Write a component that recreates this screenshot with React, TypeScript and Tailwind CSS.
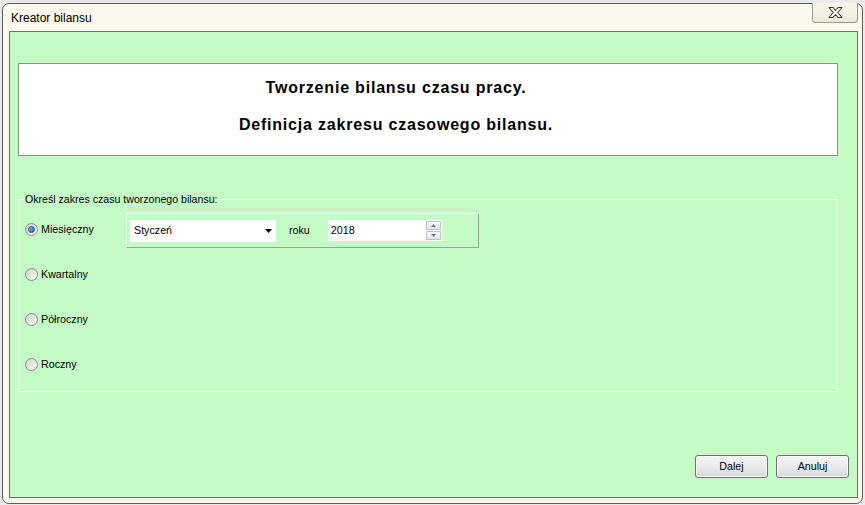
import React from "react";

const font = { fontFamily: '"Liberation Sans", Arial, sans-serif' };

function Radio({ checked, label }: { checked?: boolean; label: string }) {
  return (
    <div className="flex items-center h-[13px]">
      <div className="w-[13px] h-[13px] rounded-full border border-[#8b8b8b] bg-gradient-to-br from-[#d2d2d2] to-[#fafafa] flex items-center justify-center">
        {checked && (
          <div className="w-[7px] h-[7px] rounded-full bg-gradient-to-br from-[#7fc4f4] to-[#1a5fa8] border border-[#1d4f86]" />
        )}
      </div>
      <span className="ml-[3px] text-[10.7px] text-black leading-none">{label}</span>
    </div>
  );
}

function Btn({ label }: { label: string }) {
  return (
    <div className="w-[73px] h-[23px] rounded-[3px] border border-[#707070] bg-gradient-to-b from-[#f4f4f4] via-[#ebebeb] to-[#d9d9d9] flex items-center justify-center text-[10.7px] text-black shadow-[inset_0_0_0_1px_#fcfcfc]">
      {label}
    </div>
  );
}

export default function App() {
  return (
    <div className="w-[865px] h-[505px] bg-[#eaeaea] overflow-hidden pt-[3px] pl-[2px]" style={font}>
      <div className="w-[861px] h-[501px] rounded-[7px] border border-[#5d5d5d] bg-[#fbf9ec] flex flex-col">
        {/* title bar */}
        <div className="h-[27px] flex items-start justify-between pl-[8px] pr-[4px]">
          <span className="mt-[7px] text-[12px] text-black leading-[14px]">Kreator bilansu</span>
          <div className="-mt-[1px] w-[46px] h-[20px] rounded-b-[4px] border border-t-0 border-[#9a9a8a] bg-gradient-to-b from-[#faf7ea] to-[#eeebdc] flex items-center justify-center">
            <svg width="17" height="13" viewBox="0 0 17 13">
              <path
                d="M2 1.5 L6 1.5 L8.5 4.5 L11 1.5 L15 1.5 L10.8 6.5 L15 11.5 L11 11.5 L8.5 8.5 L6 11.5 L2 11.5 L6.2 6.5 Z"
                fill="#ffffff"
                stroke="#3d3d3d"
                strokeWidth="1.1"
                strokeLinejoin="round"
              />
            </svg>
          </div>
        </div>
        {/* client area */}
        <div className="ml-[6px] w-[849px] h-[467px] border border-[#6f6f6f] bg-[#c5fcc5] flex flex-col pl-[8px]">
          <div className="mt-[31px] w-[820px] h-[93px] bg-white border border-[#8f8f8f] flex flex-col items-center pt-[15px] pr-[64px] gap-[19px]">
            <div className="text-[16px] font-bold text-black leading-[18px] tracking-[0.8px]">Tworzenie bilansu czasu pracy.</div>
            <div className="text-[16px] font-bold text-black leading-[18px] tracking-[0.8px]">Definicja zakresu czasowego bilansu.</div>
          </div>
          <fieldset className="mt-[37px] w-[820px] h-[199px] border border-[#eef9ee] p-0 m-0">
            <legend className="ml-[5px] px-[1px] text-[10.6px] text-black leading-[13px]">
              Określ zakres czasu tworzonego bilansu:
            </legend>
            <div className="flex pl-[6px] pt-[7px]">
              <div className="flex flex-col gap-[32px] pt-[10px] w-[101px]">
                <Radio checked label="Miesięczny" />
                <Radio label="Kwartalny" />
                <Radio label="Półroczny" />
                <Radio label="Roczny" />
              </div>
              <div className="w-[353px] h-[35px] border border-t-[#f6fcf6] border-l-[#e4f2e4] border-r-[#9e9e9e] border-b-[#9e9e9e] flex items-center pl-[3px]">
                <div className="w-[146px] h-[22px] bg-white flex items-center justify-between pl-[4px] pr-[4px]">
                  <span className="text-[10.7px] text-black">Styczeń</span>
                  <svg width="7" height="4" viewBox="0 0 7 4">
                    <path d="M0 0 L7 0 L3.5 4 Z" fill="#000" />
                  </svg>
                </div>
                <span className="ml-[13px] text-[10.7px] text-black">roku</span>
                <div className="ml-[18px] w-[114px] h-[21px] bg-white flex items-center justify-between pl-[3px] pr-[1px]">
                  <span className="text-[10.7px] text-black">2018</span>
                  <div className="flex flex-col gap-[1px]">
                    <div className="w-[15px] h-[9px] border border-[#b9c3cc] bg-gradient-to-b from-[#fafbfc] to-[#e2e7ec] flex items-center justify-center">
                      <svg width="5" height="3" viewBox="0 0 5 3"><path d="M0 3 L5 3 L2.5 0 Z" fill="#6b7888" /></svg>
                    </div>
                    <div className="w-[15px] h-[9px] border border-[#b9c3cc] bg-gradient-to-b from-[#fafbfc] to-[#e2e7ec] flex items-center justify-center">
                      <svg width="5" height="3" viewBox="0 0 5 3"><path d="M0 0 L5 0 L2.5 3 Z" fill="#6b7888" /></svg>
                    </div>
                  </div>
                </div>
              </div>
            </div>
          </fieldset>
          <div className="mt-[63px] w-[831px] flex justify-end gap-[8px]">
            <Btn label="Dalej" />
            <Btn label="Anuluj" />
          </div>
        </div>
      </div>
    </div>
  );
}
